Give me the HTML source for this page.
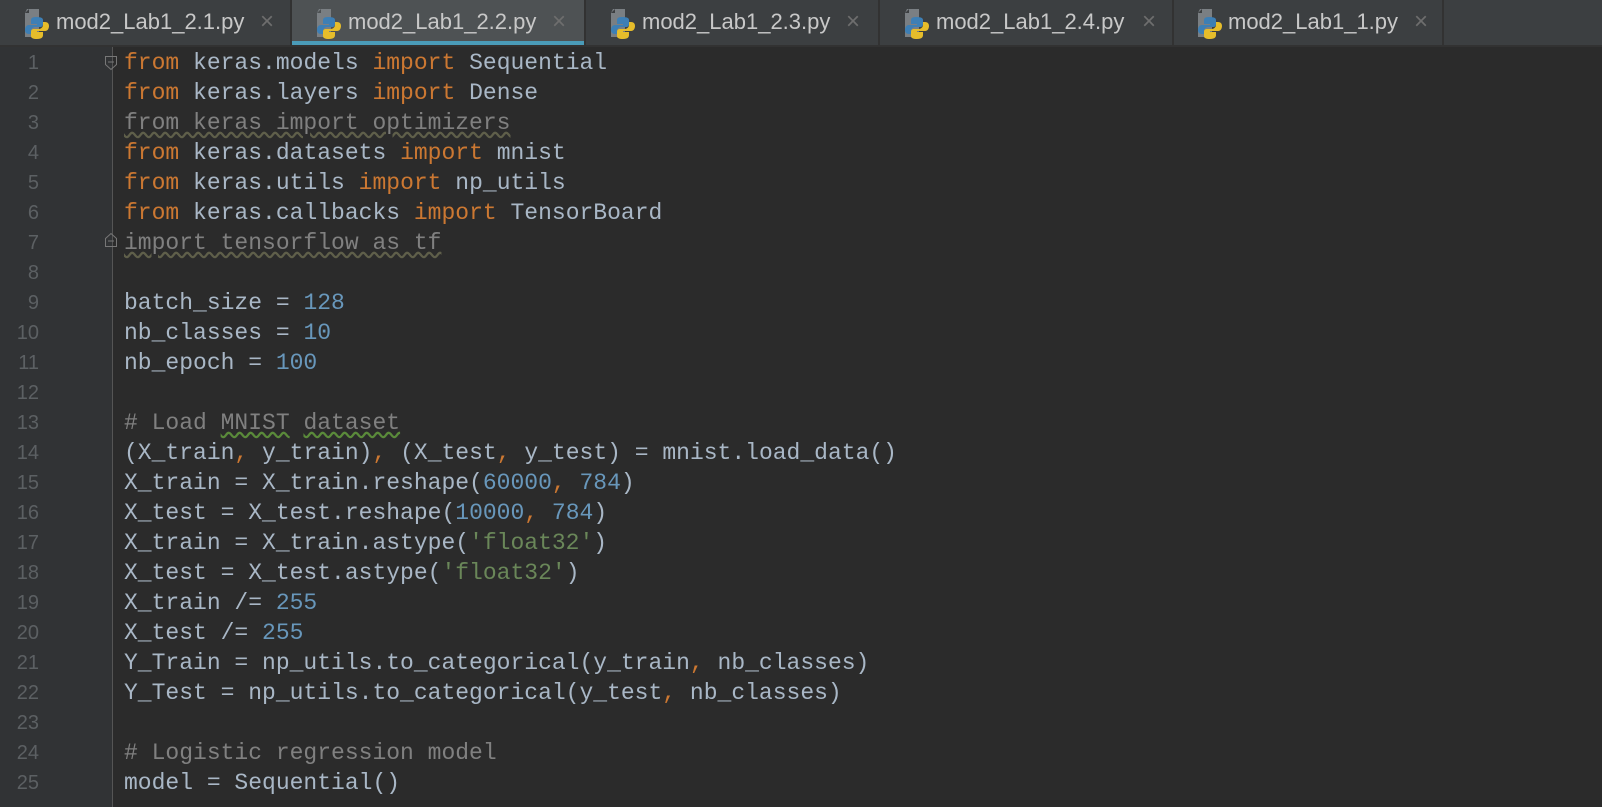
<!DOCTYPE html>
<html><head><style>
body{margin:0;width:1602px;height:801px;background:#2b2b2b;overflow:hidden;font-family:"Liberation Sans",sans-serif}
.tabs{position:absolute;left:0;top:0;width:1602px;height:45px;background:#3c3f41;border-bottom:2px solid #323232}
.tab{position:absolute;top:0;height:45px;border-right:2px solid #323232;color:#c8c8c8;font-size:22px;line-height:45px;box-sizing:border-box}
.tab.act{background:#4e5254}
.tab.act:after{content:"";position:absolute;left:0;right:0;bottom:0;height:4px;background:#4a9bb8}
.tab svg{position:absolute;left:21px;top:7px}
.tab .t{position:absolute;left:56px;top:-1px}
.tab .x{position:absolute;top:-1px;color:#6e6e6e;font-size:24px}
.gut{position:absolute;left:0;top:47px;width:112px;height:760px;background:#313335;border-right:1px solid #555}
pre{position:absolute;left:124px;top:48px;margin:0;font:23px/30px "Liberation Mono",monospace;color:#a9b7c6}
.k{color:#cc7832}.n{color:#6897bb}.s{color:#6a8759}.c{color:#808080}.g{color:#808080;text-decoration:underline wavy #5f5f4a}
.w{text-decoration:underline wavy #5a8a3a}
</style></head><body>
<div class="tabs">
<div class="tab" style="left:0;width:292px"><svg width="30" height="32" viewBox="0 0 30 32"><path d="M6 2h12v28H4V6z" fill="#7a7f83"/><path d="M4 6l4-4v4z" fill="#3c3f41"/><path d="M15 10c-5 0-5 2-5 4v3h6v1H8c-3 0-4 3-4 5s1 4 4 4h2v-3c0-2 2-4 4-4h5c2 0 3-1 3-3v-4c0-2-2-3-7-3z" fill="#3d7fb5"/><path d="M16 32c5 0 6-2 6-4v-3h-6v-1h8c3 0 4-3 4-5s-1-4-4-4h-2v3c0 2-2 4-4 4h-5c-2 0-3 1-3 3v4c0 2 2 3 6 3z" fill="#e6bd2b"/></svg><span class="t">mod2_Lab1_2.1.py</span><span class="x" style="left:260px">×</span></div>
<div class="tab act" style="left:292px;width:294px"><svg width="30" height="32" viewBox="0 0 30 32"><path d="M6 2h12v28H4V6z" fill="#7a7f83"/><path d="M4 6l4-4v4z" fill="#4e5254"/><path d="M15 10c-5 0-5 2-5 4v3h6v1H8c-3 0-4 3-4 5s1 4 4 4h2v-3c0-2 2-4 4-4h5c2 0 3-1 3-3v-4c0-2-2-3-7-3z" fill="#3d7fb5"/><path d="M16 32c5 0 6-2 6-4v-3h-6v-1h8c3 0 4-3 4-5s-1-4-4-4h-2v3c0 2-2 4-4 4h-5c-2 0-3 1-3 3v4c0 2 2 3 6 3z" fill="#e6bd2b"/></svg><span class="t">mod2_Lab1_2.2.py</span><span class="x" style="left:260px">×</span></div>
<div class="tab" style="left:586px;width:294px"><svg width="30" height="32" viewBox="0 0 30 32"><path d="M6 2h12v28H4V6z" fill="#7a7f83"/><path d="M4 6l4-4v4z" fill="#3c3f41"/><path d="M15 10c-5 0-5 2-5 4v3h6v1H8c-3 0-4 3-4 5s1 4 4 4h2v-3c0-2 2-4 4-4h5c2 0 3-1 3-3v-4c0-2-2-3-7-3z" fill="#3d7fb5"/><path d="M16 32c5 0 6-2 6-4v-3h-6v-1h8c3 0 4-3 4-5s-1-4-4-4h-2v3c0 2-2 4-4 4h-5c-2 0-3 1-3 3v4c0 2 2 3 6 3z" fill="#e6bd2b"/></svg><span class="t">mod2_Lab1_2.3.py</span><span class="x" style="left:260px">×</span></div>
<div class="tab" style="left:880px;width:294px"><svg width="30" height="32" viewBox="0 0 30 32"><path d="M6 2h12v28H4V6z" fill="#7a7f83"/><path d="M4 6l4-4v4z" fill="#3c3f41"/><path d="M15 10c-5 0-5 2-5 4v3h6v1H8c-3 0-4 3-4 5s1 4 4 4h2v-3c0-2 2-4 4-4h5c2 0 3-1 3-3v-4c0-2-2-3-7-3z" fill="#3d7fb5"/><path d="M16 32c5 0 6-2 6-4v-3h-6v-1h8c3 0 4-3 4-5s-1-4-4-4h-2v3c0 2-2 4-4 4h-5c-2 0-3 1-3 3v4c0 2 2 3 6 3z" fill="#e6bd2b"/></svg><span class="t">mod2_Lab1_2.4.py</span><span class="x" style="left:262px">×</span></div>
<div class="tab" style="left:1174px;width:270px"><svg width="30" height="32" viewBox="0 0 30 32" style="left:20px"><path d="M6 2h12v28H4V6z" fill="#7a7f83"/><path d="M4 6l4-4v4z" fill="#3c3f41"/><path d="M15 10c-5 0-5 2-5 4v3h6v1H8c-3 0-4 3-4 5s1 4 4 4h2v-3c0-2 2-4 4-4h5c2 0 3-1 3-3v-4c0-2-2-3-7-3z" fill="#3d7fb5"/><path d="M16 32c5 0 6-2 6-4v-3h-6v-1h8c3 0 4-3 4-5s-1-4-4-4h-2v3c0 2-2 4-4 4h-5c-2 0-3 1-3 3v4c0 2 2 3 6 3z" fill="#e6bd2b"/></svg><span class="t" style="left:54px">mod2_Lab1_1.py</span><span class="x" style="left:240px">×</span></div>
</div>
<div class="gut"></div>
<div style="position:absolute;left:0;top:48px;width:39px;text-align:right;color:#5c6063;font:20px/30px 'Liberation Sans',sans-serif">1<br>2<br>3<br>4<br>5<br>6<br>7<br>8<br>9<br>10<br>11<br>12<br>13<br>14<br>15<br>16<br>17<br>18<br>19<br>20<br>21<br>22<br>23<br>24<br>25</div>
<svg style="position:absolute;left:104px;top:55px" width="14" height="16"><path d="M1.5 1.5h11v8l-5.5 5l-5.5-5z" fill="none" stroke="#777"/><path d="M4 7h6" stroke="#777"/></svg>
<svg style="position:absolute;left:104px;top:232px" width="14" height="16"><path d="M1.5 14.5h11v-8l-5.5-5l-5.5 5z" fill="none" stroke="#777"/><path d="M4 9h6" stroke="#777"/></svg>
<pre><span class="k">from</span> keras.models <span class="k">import</span> Sequential
<span class="k">from</span> keras.layers <span class="k">import</span> Dense
<span class="g">from keras import optimizers</span>
<span class="k">from</span> keras.datasets <span class="k">import</span> mnist
<span class="k">from</span> keras.utils <span class="k">import</span> np_utils
<span class="k">from</span> keras.callbacks <span class="k">import</span> TensorBoard
<span class="g">import tensorflow as tf</span>

batch_size = <span class="n">128</span>
nb_classes = <span class="n">10</span>
nb_epoch = <span class="n">100</span>

<span class="c"># Load <span class="w">MNIST</span> <span class="w">dataset</span></span>
(X_train<span class="k">,</span> y_train)<span class="k">,</span> (X_test<span class="k">,</span> y_test) = mnist.load_data()
X_train = X_train.reshape(<span class="n">60000</span><span class="k">,</span> <span class="n">784</span>)
X_test = X_test.reshape(<span class="n">10000</span><span class="k">,</span> <span class="n">784</span>)
X_train = X_train.astype(<span class="s">'float32'</span>)
X_test = X_test.astype(<span class="s">'float32'</span>)
X_train /= <span class="n">255</span>
X_test /= <span class="n">255</span>
Y_Train = np_utils.to_categorical(y_train<span class="k">,</span> nb_classes)
Y_Test = np_utils.to_categorical(y_test<span class="k">,</span> nb_classes)

<span class="c"># Logistic regression model</span>
model = Sequential()
</pre>
</body></html>
